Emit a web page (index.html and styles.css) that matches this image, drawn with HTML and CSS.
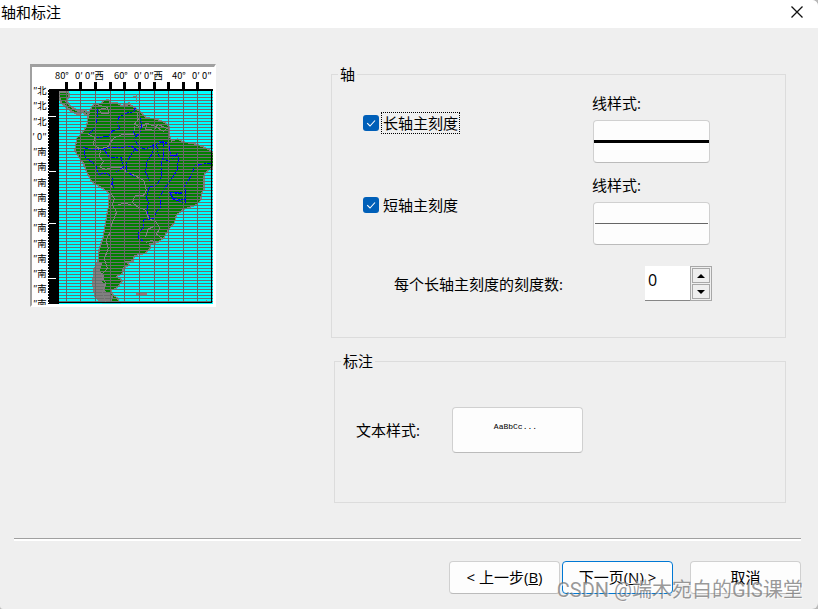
FILE: index.html
```html
<!DOCTYPE html>
<html lang="zh-CN">
<head>
<meta charset="utf-8">
<title>轴和标注</title>
<link rel="stylesheet" href="styles.css">
</head>
<body>
<div class="dialog">
  <header class="titlebar">
    <h1 class="title">轴和标注</h1>
    <button class="close" type="button" aria-label="关闭">
      <svg width="14" height="14" viewBox="0 0 14 14"><path d="M1.5 1.5 12.5 12.5M12.5 1.5 1.5 12.5" fill="none" stroke="#111" stroke-width="1.3"/></svg>
    </button>
  </header>
  <main class="content">
    <div class="preview">
      <svg class="map" viewBox="36 36 546 714" role="img" aria-label="南美洲">
        <defs>
          <clipPath id="area"><rect x="117" y="108" width="462" height="637"/></clipPath>
        </defs>
        <rect x="36" y="36" width="546" height="717" fill="#fff"/>
        <rect x="111" y="108" width="468" height="639" fill="#0ff"/>
        <g clip-path="url(#area)" shape-rendering="crispEdges">
          <path fill="#008000" stroke="#808080" stroke-width="4" d="M205 178 208 166 220 150 245 145 252 137 266 133 272 145 290 143 303 151 330 149 345 158 360 170 380 188 412 193 435 203 447 215 447 240 455 258 472 252 495 262 530 268 560 280 584 295 584 335 565 345 552 360 552 404 544 415 543 435 528 450 490 463 470 480 462 505 445 525 430 550 412 563 388 566 393 577 375 595 343 602 340 618 318 620 328 630 310 640 308 654 290 665 308 677 290 700 275 705 276 717 292 729 300 745 250 745 225 725 218 685 222 645 235 615 237 585 250 545 258 495 265 455 268 415 240 395 215 380 200 350 190 325 172 300 165 285 170 250 185 235 200 215Z"/>
          <path fill="#008000" stroke="#808080" stroke-width="6" d="M117 112 145 112 148 124 139 138 150 152 164 162 176 170 194 166 207 174 202 182 188 172 174 178 153 168 139 156 124 144 118 128Z"/>
          <path fill="#808080" d="M235 618 248 626 238 648 253 660 246 680 260 690 252 705 280 722 273 745 236 738 221 719 216 673 224 634Z M348 715 362 711 380 713 380 721 350 720ZM558 736 574 738 574 744 560 740Z"/>
          <path d="M348 115.5V745" stroke="#6e6e6e" stroke-width="462" stroke-dasharray="3 6"/>
          <g fill="none" stroke="#808080" stroke-width="3">
            <path d="M235 150 262 157 266 174 244 177 237 163 258 160M350 170 355 192 343 208 360 216 381 208 375 222 402 226 413 208 441 220 430 229 405 214 380 205 367 212"/>
            <path d="M205 237 223 247 221 270 242 283 238 303 250 320 239 336 258 343 275 338 302 337 319 350 347 363 372 377 379 407 369 423 345 422 337 442 352 455 377 466 387 492 407 500 420 520 409 537 427 551 415 562 394 557 377 562"/>
            <path d="M274 390 270 410 283 431 277 451 290 470 283 490 274 510 269 535 258 554 265 580 253 612 262 640 245 659 257 686 247 711 257 740M294 448 320 445 337 452M377 545 384 523 401 514M226 285 264 275 281 249 311 237 340 239 345 212"/>
            <path d="M270 137 277 148M325 141 332 147M350 116 351 140M340 125 356 127"/>
          </g>
          <path fill="none" stroke="#00f" stroke-width="3" stroke-dasharray="15 4 6 4" d="M234 162 230 195 225 220 207 237M346 158 340 173 320 174 298 185 291 205 300 223 278 227 266 243 230 249M358 180 365 210 359 235 343 248 354 274 377 283 405 269 430 260 451 269M190 278 221 285 248 284 270 276 307 277 335 274 358 291M192 286 197 309 226 328 237 358 262 354 279 373 274 390M253 285 268 307 303 307 310 337 288 350M348 280 333 299 318 326 319 350 345 365M402 268 398 295 380 320 377 352 388 377M432 262 431 298 423 330 426 365 410 390 388 397M449 273 451 303 475 301 473 342 460 364 444 387 431 403 419 428 423 456 409 470 401 491 371 495 369 519 356 533 355 549 369 558M388 396 379 426 385 442 380 467 390 489M497 401 496 445 460 432 450 413 490 411M445 413 485 415M455 431 500 434M576 327 555 325 524 333 516 358 505 375 490 399M276 378 281 399M417 260 444 266M409 268 418 307M450 320 428 310M474 295 453 315M345 241 335 221"/>
          <path d="M139.5 108V745M181.5 108V745M226.5 108V745M271.5 108V745M313.5 108V745M358.5 108V745M403.5 108V745M445.5 108V745M490.5 108V745M532.5 108V745" stroke="#666" stroke-width="3"/>
        </g>
        <g shape-rendering="crispEdges">
          <path d="M87 102H579V108H117V747H87ZM573 108H576V741H573ZM117 741H576V744H117Z"/>
          <path d="M139.5 81V104M181.5 81V104M226.5 81V104M271.5 81V104M313.5 81V104M358.5 81V104M403.5 81V104M445.5 81V104M490.5 81V104M532.5 81V104" stroke="#000" stroke-width="9"/>
          <path d="M85.5 105V747" stroke="#000" stroke-width="3" stroke-dasharray="6 3"/>
          <path d="M87 184.5H108M87 349.5H108M87 505.5H108M87 670.5H108" stroke="#fff" stroke-width="3"/>
        </g>
        <g class="degrees">
          <text x="105" y="72">80°</text><text x="165" y="72">0′</text><text x="195" y="72">0″西</text>
          <text x="282" y="72">60°</text><text x="342" y="72">0′</text><text x="372" y="72">0″西</text>
          <text x="456" y="72">40°</text><text x="516" y="72">0′</text><text x="546" y="72">0″</text>
        </g>
        <g class="degrees" text-anchor="end">
          <text x="80" y="118">″北</text><text x="80" y="163">″北</text><text x="80" y="209">″北</text><text x="80" y="254">′ 0″</text>
          <text x="80" y="300">″南</text><text x="80" y="346">″南</text><text x="80" y="392">″南</text><text x="80" y="438">″南</text>
          <text x="80" y="483">″南</text><text x="80" y="529">″南</text><text x="80" y="575">″南</text><text x="80" y="620">″南</text>
          <text x="80" y="666">″南</text><text x="80" y="712">″南</text><text x="80" y="755">″南</text>
        </g>
      </svg>
    </div>
    <form class="settings">
      <fieldset class="group">
        <legend>轴</legend>
        <div class="axes">
          <label class="check"><input type="checkbox" checked><span class="caption focused">长轴主刻度</span></label>
          <div class="style-field">
            <label for="major-style">线样式:</label>
            <button id="major-style" class="swatch" type="button"><span class="line thick"></span></button>
          </div>
          <label class="check"><input type="checkbox" checked><span class="caption">短轴主刻度</span></label>
          <div class="style-field">
            <label for="minor-style">线样式:</label>
            <button id="minor-style" class="swatch" type="button"><span class="line"></span></button>
          </div>
        </div>
        <div class="count">
          <label for="tick-count">每个长轴主刻度的刻度数:</label>
          <div class="spin">
            <input id="tick-count" type="text" value="0">
            <div class="steps">
              <button type="button" aria-label="增加"><svg width="8" height="4" viewBox="0 0 8 4"><path d="M0 4 4 0 8 4Z"/></svg></button>
              <button type="button" aria-label="减少"><svg width="8" height="4" viewBox="0 0 8 4"><path d="M0 0 4 4 8 0Z"/></svg></button>
            </div>
          </div>
        </div>
      </fieldset>
      <fieldset class="group labels">
        <legend>标注</legend>
        <div class="text-field">
          <label for="text-style">文本样式:</label>
          <button id="text-style" class="sample" type="button">AaBbCc...</button>
        </div>
      </fieldset>
    </form>
  </main>
  <footer class="footer">
    <hr class="rule">
    <div class="actions">
      <button class="action" type="button">&lt; 上一步(<u>B</u>)</button>
      <button class="action primary" type="button">下一页(<u>N</u>) &gt;</button>
      <button class="action cancel" type="button">取消</button>
    </div>
  </footer>
  <div class="watermark">CSDN @端木宛白的GIS课堂</div>
</div>
</body>
</html>
```
FILE: styles.css
```css
* { box-sizing: border-box; }

body {
  margin: 0;
  background: #b8b8b8;
  color: #000;
  font: 15px/20px "Open Sans", "Noto Sans CJK SC", sans-serif;
}

button, input { font: inherit; color: inherit; margin: 0; }

.dialog {
  position: relative;
  display: flex;
  flex-direction: column;
  min-height: 100vh;
  background: #efefef;
  border-radius: 0 6px 6px 3px;
  overflow: hidden;
}

.titlebar {
  display: flex;
  align-items: center;
  justify-content: space-between;
  height: 28px;
  padding: 0 14px 4px 1px;
  background: #fff;
}

.title { margin: 0; font-size: 15px; font-weight: 400; }

.close { display: flex; padding: 0; border: 0; background: none; }

.content {
  flex: 1;
  display: grid;
  grid-template-columns: 186px 1fr;
  column-gap: 115px;
  align-items: start;
  padding: 36px 32px 0 30px;
}

.preview {
  border: 2px solid #fff;
  border-top: 3px solid #a0a0a0;
  border-left-color: #a0a0a0;
}

.map { display: block; width: 100%; }

.degrees { font: 28px "Noto Sans CJK SC", sans-serif; }

.settings { display: flex; flex-direction: column; gap: 13px; }

.group {
  min-width: 0;
  margin: 0;
  padding: 0 31px 36px;
  border: 1px solid #dcdcdc;
}

.group legend { margin-left: -25px; padding: 0 2px; }

.axes {
  display: grid;
  grid-template-columns: 229px 120px;
  row-gap: 12px;
  padding-top: 9px;
}

.check { display: flex; align-items: center; gap: 3px; height: 20px; margin-top: 20px; }

.check input {
  appearance: none;
  width: 16px;
  height: 16px;
  margin: 0;
  border-radius: 3px;
  background: #005fb8 url("data:image/svg+xml,%3Csvg xmlns='http://www.w3.org/2000/svg' viewBox='0 0 16 16'%3E%3Cpath d='M4.2 8.2 7 11 12 5.5' fill='none' stroke='white' stroke-width='1.1'/%3E%3C/svg%3E");
}

.caption { padding: 0 1px; }

.focused { outline: 1px dotted #000; }

.style-field { display: flex; flex-direction: column; gap: 7px; }

.swatch, .sample, .action {
  border: 1px solid #d0d0d0;
  border-bottom-color: #bbb;
  border-radius: 4px;
  background: #fdfdfd;
}

.swatch { display: flex; align-items: center; width: 117px; height: 43px; margin-left: 1px; padding: 0; }

.line { flex: 1; height: 1px; margin: 0 1px; background: #666; }

.thick { height: 3px; margin: 0; background: #000; }

.count {
  display: flex;
  align-items: center;
  justify-content: space-between;
  width: 349px;
  margin-top: 21px;
  padding-left: 31px;
}

.spin { display: flex; height: 35px; }

.spin input {
  width: 45px;
  padding: 0 3px 7px;
  border: 0;
  border-bottom: 1px solid #868686;
  border-radius: 0;
  background: #fff;
  font-size: 16px;
}

.steps {
  display: flex;
  flex-direction: column;
  gap: 1px;
  width: 22px;
  padding: 1px;
  border: 1px solid #a8a8a8;
}

.steps button {
  flex: 1;
  display: flex;
  align-items: center;
  justify-content: center;
  padding: 0;
  border: 1px solid #a8a8a8;
  background: #eee;
}

.labels { margin-left: 3px; padding: 0 21px 49px; }

.labels legend { margin-left: -15px; }

.text-field { display: flex; align-items: center; gap: 32px; padding-top: 36px; }

.sample {
  width: 131px;
  height: 46px;
  padding: 0 4px 6px 0;
  font: 8px/10px "Liberation Mono", monospace;
}

.footer { padding: 0 17px 15px 14px; }

.rule {
  height: 3px;
  margin: 0 0 20px;
  border: 0;
  border-top: 1px solid #a0a0a0;
  background: #fff;
}

.actions { display: flex; justify-content: flex-end; gap: 2px; }

.action { width: 111px; height: 33px; padding: 0 0 2px; }

.primary { border-color: #0078d4; }

.cancel { margin-left: 15px; }

.watermark {
  position: absolute;
  right: 15px;
  bottom: 5px;
  color: rgba(120, 120, 120, 0.75);
  font-family: Roboto, "Noto Sans CJK SC", sans-serif;
  font-size: 20px;
  line-height: 28px;
  text-shadow: 1px 1px 0 rgba(255, 255, 255, 0.6);
  white-space: nowrap;
  pointer-events: none;
}
```
